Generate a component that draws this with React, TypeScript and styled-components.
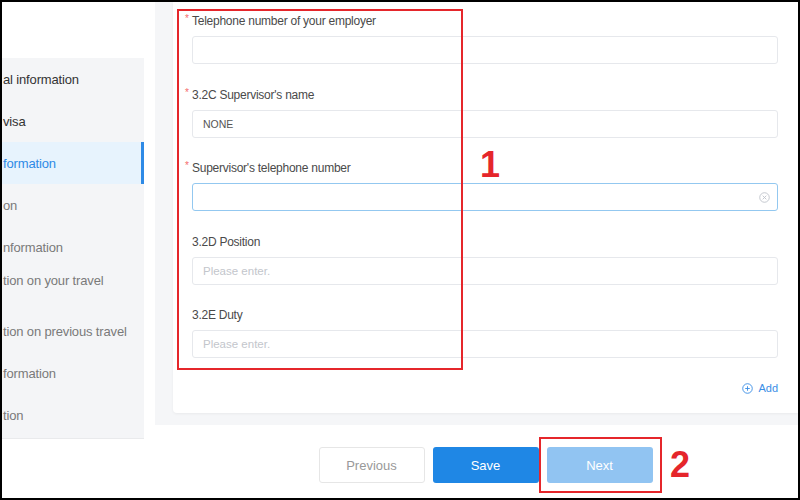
import styled, { createGlobalStyle } from 'styled-components';

const GlobalStyle = createGlobalStyle`
    html, body {
        margin: 0;
        padding: 0;
        background: #fff;
    }
    * {
        box-sizing: border-box;
    }
`

const Frame = styled.div`
    position: relative;
    width: 800px;
    height: 500px;
    border: 2px solid #000;
    display: flex;
    overflow: hidden;
    background: #fff;
    font-family: "Liberation Sans", Arial, sans-serif;
`

const SideColumn = styled.div`
    width: 153px;
    flex-shrink: 0;
    padding-top: 56px;
`

const Nav = styled.nav`
    width: 142px;
    background: #f4f5f7;
    border-bottom: 1px solid #e9eaec;
    padding-bottom: 2px;
    overflow: hidden;
`

const NavItem = styled.div<{ $active?: boolean; $tone?: 'dark' | 'gray'; $lift?: boolean }>`
    height: 42px;
    display: flex;
    align-items: ${props => props.$lift ? 'flex-start' : 'center'};
    padding-top: ${props => props.$lift ? '5px' : '0'};
    padding-left: 1px;
    white-space: nowrap;
    font-size: 13px;
    letter-spacing: -0.15px;
    color: ${props => props.$active ? '#2e8ae6' : props.$tone === 'dark' ? '#333' : '#7a7a7a'};
    background: ${props => props.$active ? '#e7f3fd' : 'transparent'};
    border-right: 3px solid ${props => props.$active ? '#2e8ae6' : 'transparent'};
`

const MainColumn = styled.div`
    flex: 1;
    display: flex;
    flex-direction: column;
`

const ContentArea = styled.div`
    background: #f5f6f8;
    padding: 0 0 12px 18px;
`

const Card = styled.div`
    background: #fff;
    border-bottom-left-radius: 4px;
    box-shadow: 0 1px 3px rgba(0, 0, 0, 0.05);
    padding: 10px 20px 16px 19px;
`

const Form = styled.div`
    display: flex;
    flex-direction: column;
    gap: 21.5px;
`

const Field = styled.div`
    display: flex;
    flex-direction: column;
`

const Label = styled.label`
    position: relative;
    height: 18px;
    line-height: 18px;
    margin-bottom: 6px;
    font-size: 12px;
    letter-spacing: -0.25px;
    color: #4a4a4a;
`

const Star = styled.span`
    position: absolute;
    left: -7px;
    top: -2px;
    color: #f56c6c;
    font-size: 10px;
`

const InputBox = styled.div<{ $focused?: boolean }>`
    height: 28px;
    border: 1px solid ${props => props.$focused ? '#93c8f0' : '#e6e8ec'};
    border-radius: 3px;
    display: flex;
    align-items: center;
    justify-content: space-between;
    padding: 0 7px 0 10px;
    background: #fff;
`

const Value = styled.span<{ $placeholder?: boolean }>`
    font-size: ${props => props.$placeholder ? '11.5px' : '10.5px'};
    color: ${props => props.$placeholder ? '#c3c6cc' : '#555'};
`

const AddRow = styled.div`
    margin-top: 21px;
    height: 18px;
    display: flex;
    justify-content: flex-end;
    align-items: center;
    gap: 5px;
    color: #3a8ee6;
    font-size: 11px;
`

const Footer = styled.div`
    display: flex;
    justify-content: center;
    gap: 8px;
    padding: 22px 0 0 18px;
`

const Button = styled.button<{ $variant: 'plain' | 'primary' | 'disabled' }>`
    width: 106px;
    height: 36px;
    border-radius: 3px;
    font-family: "Liberation Sans", Arial, sans-serif;
    font-size: 13px;
    cursor: pointer;
    border: 1px solid ${props => props.$variant === 'plain' ? '#e6e6e6' : 'transparent'};
    color: ${props => props.$variant === 'plain' ? '#999' : '#fff'};
    background: ${props => props.$variant === 'plain' ? '#fff' : props.$variant === 'primary' ? '#1f87e5' : '#91c4f2'};
`

const Highlight = styled.div<{ $left: number; $top: number; $width: number; $height: number }>`
    position: absolute;
    left: ${props => props.$left}px;
    top: ${props => props.$top}px;
    width: ${props => props.$width}px;
    height: ${props => props.$height}px;
    border: 2px solid #e5262b;
    pointer-events: none;
`

const Marker = styled.span<{ $left: number; $top: number }>`
    position: absolute;
    left: ${props => props.$left}px;
    top: ${props => props.$top}px;
    font-size: 36px;
    line-height: 1;
    font-weight: 700;
    color: #e5262b;
`

const navItems = [
    { text: 'al information', tone: 'dark' as const },
    { text: 'visa', tone: 'dark' as const },
    { text: 'formation', active: true },
    { text: 'on' },
    { text: 'nformation' },
    { text: 'tion on your travel', lift: true },
    { text: 'tion on previous travel' },
    { text: 'formation' },
    { text: 'tion' },
]

const fields = [
    { label: "Telephone number of your employer", required: true },
    { label: "3.2C Supervisor's name", required: true, value: 'NONE' },
    { label: "Supervisor's telephone number", required: true, focused: true },
    { label: '3.2D Position', placeholder: 'Please enter.' },
    { label: '3.2E Duty', placeholder: 'Please enter.' },
]

function ClearIcon() {
    return (
        <svg width="11" height="11" viewBox="0 0 12 12" fill="none" stroke="#c0c4cc" strokeWidth="1">
            <circle cx="6" cy="6" r="5.2" />
            <path d="M4 4l4 4M8 4l-4 4" />
        </svg>
    )
}

function PlusCircle() {
    return (
        <svg width="11" height="11" viewBox="0 0 12 12" fill="none" stroke="#3a8ee6" strokeWidth="1">
            <circle cx="6" cy="6" r="5.2" />
            <path d="M6 3.5v5M3.5 6h5" />
        </svg>
    )
}

export default function App() {
    return (
        <>
            <GlobalStyle />
            <Frame>
                <SideColumn>
                    <Nav>
                        {navItems.map((item, i) => (
                            <NavItem key={i} $active={item.active} $tone={item.tone} $lift={item.lift}>
                                {item.text}
                            </NavItem>
                        ))}
                    </Nav>
                </SideColumn>

                <MainColumn>
                    <ContentArea>
                        <Card>
                            <Form>
                                {fields.map(f => (
                                    <Field key={f.label}>
                                        <Label>
                                            {f.required && <Star>*</Star>}
                                            {f.label}
                                        </Label>
                                        <InputBox $focused={f.focused}>
                                            {f.value && <Value>{f.value}</Value>}
                                            {f.placeholder && <Value $placeholder>{f.placeholder}</Value>}
                                            {f.focused && (<><span /><ClearIcon /></>)}
                                        </InputBox>
                                    </Field>
                                ))}
                            </Form>
                            <AddRow>
                                <PlusCircle />
                                <span>Add</span>
                            </AddRow>
                        </Card>
                    </ContentArea>

                    <Footer>
                        <Button $variant="plain">Previous</Button>
                        <Button $variant="primary">Save</Button>
                        <Button $variant="disabled">Next</Button>
                    </Footer>
                </MainColumn>

                <Highlight $left={175} $top={7} $width={286} $height={361} />
                <Marker $left={478} $top={145}>1</Marker>
                <Highlight $left={537} $top={435} $width={123} $height={56} />
                <Marker $left={668} $top={445}>2</Marker>
            </Frame>
        </>
    )
}
